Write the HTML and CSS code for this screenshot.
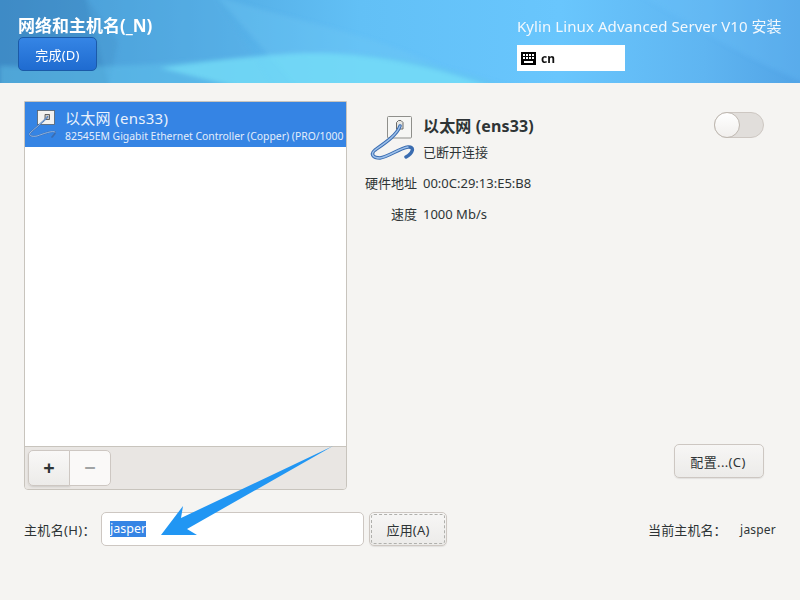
FILE: index.html
```html
<!DOCTYPE html>
<html lang="zh-CN">
<head>
<meta charset="utf-8">
<title>网络和主机名</title>
<link rel="stylesheet" href="styles.css">
</head>
<body>
<div class="app">
  <header class="header">
    <svg class="header-art" viewBox="0 0 800 83" preserveAspectRatio="none" aria-hidden="true">
      <defs>
        <linearGradient id="bg" x1="0" y1="0" x2="1" y2="0">
          <stop offset="0" stop-color="#3f8fcb"/>
          <stop offset="0.2" stop-color="#4ea6de"/>
          <stop offset="0.45" stop-color="#62c0f6"/>
          <stop offset="0.7" stop-color="#69c6fd"/>
          <stop offset="0.88" stop-color="#5fb5f1"/>
          <stop offset="1" stop-color="#52a4e6"/>
        </linearGradient>
        <filter id="soft"><feGaussianBlur stdDeviation="2"/></filter>
      </defs>
      <rect width="800" height="83" fill="url(#bg)"/>
      <g filter="url(#soft)">
        <path d="M-5 -5H85L118 42L108 90H-5Z" fill="#3d84bf" opacity=".4"/>
        <path d="M85 -5H215L275 90H110Z" fill="#58aee6" opacity=".35"/>
        <path d="M215 -5C300 25 400 35 480 90H300Z" fill="#6fc9f5" opacity=".3"/>
        <path d="M0 66C120 70 200 60 310 54C390 50 450 68 520 90H0Z" fill="#62c5ee" opacity=".45"/>
        <path d="M160 68C220 60 290 50 340 54C400 58 450 72 500 90H250Z" fill="#7be4fa" opacity=".6"/>
        <path d="M640 -5C700 30 740 55 805 83V-5Z" fill="#6cc3fb" opacity=".25"/>
      </g>
    </svg>
    <div class="header-left">
      <h1 class="title">网络和主机名(_N)</h1>
      <button class="done-btn" type="button">完成(D)</button>
    </div>
    <div class="header-right">
      <div class="product">Kylin Linux Advanced Server V10 安装</div>
      <div class="layout-box">
        <svg class="kbd-icon" viewBox="0 0 15 13" aria-hidden="true">
          <path fill-rule="evenodd" d="M0 0H15V13H0ZM2 2V4H4V2ZM5 2V4H7V2ZM8 2V4H10V2ZM11 2V4H13V2ZM2 5V7H4V5ZM5 5V7H7V5ZM8 5V7H10V5ZM11 5V7H13V5ZM3 9V11H12V9Z"/>
        </svg>
        <span class="layout-text">cn</span>
      </div>
    </div>
  </header>

  <main class="content">
    <div class="top-row">
      <section class="list-panel">
        <div class="device-list">
          <div class="device-row">
            <svg class="net-icon-small" viewBox="0 0 30 32" aria-hidden="true">
              <rect x="9.500" y="2.500" width="17" height="14" fill="#f2f2f0" stroke="#55606b" stroke-width=".8"/>
              <path d="M17 6.500h4.500v5H17z" fill="#c9c9c6" stroke="#444" stroke-width=".8"/>
              <path d="M19.500 9C14 15 6 21 2 25C0 28 5 29 9 28C15 26 25 22 27 24C27.500 26 25 28 24 29" fill="none" stroke="#3a6cb0" stroke-width="1.700" stroke-linecap="round"/>
              <path d="M19.500 9C14 15 6 21 2 25C0 28 5 29 9 28C15 26 25 22 27 24" fill="none" stroke="#a9c6ea" stroke-width=".8" stroke-linecap="round"/>
            </svg>
            <div class="device-text">
              <div class="device-name">以太网 (ens33)</div>
              <div class="device-desc">82545EM Gigabit Ethernet Controller (Copper) (PRO/1000</div>
            </div>
          </div>
        </div>
        <div class="list-toolbar">
          <div class="btn-group">
            <button class="tool-btn add" type="button">+</button>
            <button class="tool-btn remove" type="button">−</button>
          </div>
        </div>
      </section>

      <section class="detail-panel">
        <div class="detail-head">
          <svg class="net-icon" viewBox="0 0 48 46" aria-hidden="true">
            <rect x="17.500" y="1.500" width="24" height="21.500" rx="1" fill="#f6f6f4" stroke="#8f8f8b"/>
            <path d="M26.500 10v-2.500l2-2h2.500l2 2V14h-6.500z" fill="#e6e6e2" stroke="#6b6b68"/>
            <path d="M30 11C27 20 15 28 5 35C0 39 3 43 10 43C18 42 30 33 38 32C45 31.500 43 38 36 42" fill="none" stroke="#3a6cb0" stroke-width="3.500" stroke-linecap="round"/>
            <path d="M30 11C27 20 15 28 5 35C0 39 3 43 10 43C18 42 30 33 38 32" fill="none" stroke="#9dc0ea" stroke-width="1.400" stroke-linecap="round"/>
          </svg>
          <div class="detail-titles">
            <div class="detail-name">以太网 (ens33)</div>
            <div class="detail-status">已断开连接</div>
          </div>
          <div class="switch"><span class="knob"></span></div>
        </div>
        <dl class="props">
          <dt>硬件地址</dt><dd>00:0C:29:13:E5:B8</dd>
          <dt>速度</dt><dd>1000 Mb/s</dd>
        </dl>
        <div class="config-row">
          <button class="btn config" type="button">配置...(C)</button>
        </div>
      </section>
    </div>

    <div class="host-row">
      <label class="host-label" for="hostname">主机名(H)：</label>
      <div class="host-input" id="hostname"><span class="selected">jasper</span></div>
      <button class="btn apply" type="button">应用(A)</button>
      <div class="current">
        <span class="current-label">当前主机名：</span>
        <span class="current-value">jasper</span>
      </div>
    </div>
  </main>

  <svg class="arrow" viewBox="0 0 800 600" aria-hidden="true">
    <path d="M333 446L187 529L197 535L161 535L183 506L181 518Z" fill="#2196f3"/>
  </svg>
</div>
</body>
</html>
```

FILE: styles.css
```css
* { box-sizing: border-box; }
html, body { margin: 0; padding: 0; }
body {
  width: 800px;
  height: 600px;
  overflow: hidden;
  background: #f5f4f2;
  color: #2e3436;
  font-family: "Noto Sans", "Noto Sans CJK SC", sans-serif;
  font-size: 13px;
}
.app {
  position: relative;
  width: 800px;
  height: 600px;
  display: flex;
  flex-direction: column;
}
button { font-family: inherit; margin: 0; }

.header {
  position: relative;
  height: 83px;
  flex: none;
  display: flex;
  justify-content: space-between;
  padding: 14px 18px 0 18px;
  overflow: hidden;
  color: #fff;
}
.header-art {
  position: absolute;
  inset: 0;
  width: 100%;
  height: 100%;
}
.header-left, .header-right { position: relative; }
.title {
  margin: 0;
  font-size: 17px;
  line-height: 23px;
  font-weight: 700;
  color: #fff;
}
.done-btn {
  display: block;
  width: 79px;
  height: 34px;
  padding: 0;
  border: 1px solid #1b5aa8;
  border-radius: 5px;
  background: linear-gradient(#3585e5, #1f6bd0);
  color: #fff;
  font-size: 13px;
  letter-spacing: .2px;
}
.header-right { width: 265px; }
.product {
  font-size: 15px;
  line-height: 24px;
  white-space: nowrap;
  letter-spacing: .08px;
  color: #f2f8fd;
}
.layout-box {
  width: 108px;
  height: 26px;
  margin-top: 7px;
  background: #fff;
  display: flex;
  align-items: center;
  gap: 5px;
  padding-left: 4px;
  color: #111;
}
.kbd-icon { width: 15px; height: 13px; display: block; }
.layout-text { font-size: 12px; font-weight: 700; }

.content {
  flex: 1;
  display: flex;
  flex-direction: column;
  padding: 18px 24px 0 24px;
}
.top-row {
  display: flex;
  height: 389px;
}
.list-panel {
  width: 323px;
  flex: none;
  display: flex;
  flex-direction: column;
  border: 1px solid #c8c4bd;
  border-radius: 0 0 4px 4px;
  overflow: hidden;
}
.device-list {
  flex: 1;
  background: #fff;
  border-bottom: 1px solid #c8c4bd;
  min-height: 0;
}
.device-row {
  height: 45px;
  background: #3584e4;
  color: #fff;
  display: flex;
  padding-left: 3px;
  overflow: hidden;
}
.net-icon-small { width: 30px; height: 32px; margin-top: 6px; flex: none; display: block; }
.device-text { margin-left: 7px; white-space: nowrap; }
.device-name { font-size: 15px; line-height: 20px; margin-top: 6px; color: #eaf2fc; letter-spacing: .3px; }
.device-desc { font-size: 10.400px; line-height: 15px; color: #e4eefb; margin-top: 1px; }
.list-toolbar {
  height: 42px;
  flex: none;
  background: #e9e6e3;
  padding: 3px 0 0 3px;
}
.btn-group { display: flex; width: 83px; height: 36px; }
.tool-btn {
  height: 36px;
  padding: 0;
  border: 1px solid #cdc7c2;
  background: linear-gradient(#f9f8f7, #ecebe9);
  color: #2e3436;
  font-size: 20px;
  line-height: 1;
  font-weight: 700;
}
.tool-btn.add { width: 42px; border-radius: 5px 0 0 5px; box-shadow: 0 1px 2px rgba(0,0,0,.12); }
.tool-btn.remove {
  width: 42px;
  margin-left: -1px;
  border-radius: 0 5px 5px 0;
  background: #faf9f8;
  color: #a0a3a4;
}

.detail-panel {
  flex: 1;
  display: flex;
  flex-direction: column;
  padding: 11px 12px 0 0;
  min-width: 0;
}
.detail-head {
  display: flex;
  align-items: flex-start;
  height: 60px;
}
.net-icon { width: 48px; height: 46px; margin-left: 23px; margin-top: 3px; flex: none; display: block; }
.detail-titles { margin-left: 5px; flex: 1; }
.detail-name { font-size: 16px; font-weight: 700; line-height: 20px; margin-top: 4px; color: #2e3436; letter-spacing: .15px; }
.detail-status { font-size: 13px; line-height: 18px; margin-top: 7px; color: #2e3436; }
.switch {
  width: 50px;
  height: 26px;
  border: 1px solid #cdc7c2;
  border-radius: 13px;
  background: #e1dedb;
  flex: none;
}
.knob {
  display: block;
  width: 26px;
  height: 26px;
  margin: -1px 0 0 -1px;
  border-radius: 50%;
  border: 1px solid #bfb8b1;
  background: linear-gradient(#fff, #f1efed);
}
.props {
  display: grid;
  grid-template-columns: 70px 1fr;
  column-gap: 6px;
  row-gap: 11px;
  margin: 1px 0 0;
  font-size: 13px;
  line-height: 20px;
  color: #2e3436;
}
.props dt { text-align: right; }
.props dd { margin: 0; }
.config-row {
  margin-top: auto;
  display: flex;
  justify-content: flex-end;
  padding-bottom: 12px;
}
.btn {
  border: 1px solid #cdc7c2;
  border-radius: 5px;
  background: linear-gradient(#f7f6f5, #ecebe9);
  color: #2e3436;
  font-size: 13px;
  padding: 0;
  box-shadow: 0 1px 1px rgba(0,0,0,.08);
}
.config { width: 90px; height: 34px; letter-spacing: .35px; padding-right: 2px; }

.host-row {
  display: flex;
  align-items: center;
  height: 34px;
  margin-top: 22px;
}
.host-label { width: 77px; flex: none; white-space: nowrap; color: #2e3436; letter-spacing: .35px; }
.host-input {
  width: 263px;
  height: 34px;
  flex: none;
  border: 1px solid #cdc7c2;
  border-radius: 5px;
  background: #fff;
  padding: 0 0 0 8px;
  display: flex;
  align-items: center;
}
.selected {
  background: #3584e4;
  color: #fff;
  line-height: 16px;
  font-size: 12.500px;
}
.apply {
  width: 78px;
  height: 34px;
  margin-left: 5px;
  flex: none;
  letter-spacing: .2px;
  outline: 1px dashed #b0b0ac;
  outline-offset: -3px;
}
.current { margin-left: auto; display: flex; align-items: center; white-space: nowrap; }
.current-label { width: 92px; letter-spacing: .1px; }
.current-value { font-size: 12px; letter-spacing: .2px; }

.arrow {
  position: absolute;
  left: 0;
  top: 0;
  width: 800px;
  height: 600px;
  pointer-events: none;
}
```
